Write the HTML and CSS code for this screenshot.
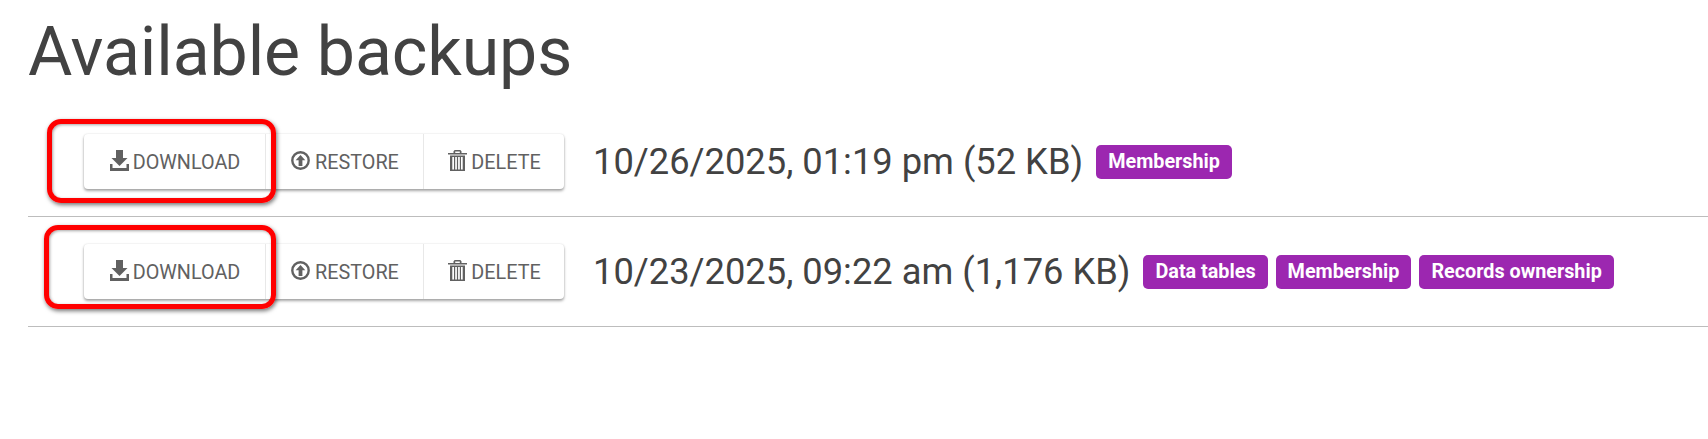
FILE: index.html
```html
<!DOCTYPE html>
<html lang="en">
<head>
<meta charset="UTF-8">
<title>Available backups</title>
<link rel="stylesheet" href="styles.css">
</head>
<body>
<div class="container">
  <h1>Available backups</h1>

  <div class="backup-row">
    <div class="btn-group">
      <a class="btn btn-download">
        <svg class="icon" viewBox="0 0 19 21"><path d="M6 0h7v8h4.500L9.500 16 1.500 8H6z"/><path d="M0 14h2.500v4h14v-4H19v7H0z"/></svg>DOWNLOAD
      </a>
      <a class="btn btn-restore">
        <svg class="icon" viewBox="0 0 19 21"><circle cx="9.500" cy="10.500" r="8.200" fill="none" stroke="currentColor" stroke-width="2.400"/><path d="M9.500 5l4.800 5.200h-2.900V16H7.600v-5.800H4.700z"/></svg>RESTORE
      </a>
      <a class="btn btn-delete">
        <svg class="icon" viewBox="0 0 19 21"><path d="M0 3h5.500V1.200L6.700 0h5.600l1.200 1.200V3H19v1.400H0zM7.200 3h4.600V1.500H7.200z"/><path fill-rule="evenodd" d="M2 5.500h15V21H2zM4.300 7v12.500h1.700V7zM7.200 7v12.500h1.700V7zM10.100 7v12.500h1.700V7zM13 7v12.500h1.700V7z"/></svg>DELETE
      </a>
    </div>
    <span class="backup-date">10/26/2025, 01:19 pm (52 KB)</span>
    <span class="badge">Membership</span>
    <div class="callout callout-first"></div>
  </div>

  <div class="backup-row">
    <div class="btn-group">
      <a class="btn btn-download">
        <svg class="icon" viewBox="0 0 19 21"><path d="M6 0h7v8h4.500L9.500 16 1.500 8H6z"/><path d="M0 14h2.500v4h14v-4H19v7H0z"/></svg>DOWNLOAD
      </a>
      <a class="btn btn-restore">
        <svg class="icon" viewBox="0 0 19 21"><circle cx="9.500" cy="10.500" r="8.200" fill="none" stroke="currentColor" stroke-width="2.400"/><path d="M9.500 5l4.800 5.200h-2.900V16H7.600v-5.800H4.700z"/></svg>RESTORE
      </a>
      <a class="btn btn-delete">
        <svg class="icon" viewBox="0 0 19 21"><path d="M0 3h5.500V1.200L6.700 0h5.600l1.200 1.200V3H19v1.400H0zM7.200 3h4.600V1.500H7.200z"/><path fill-rule="evenodd" d="M2 5.500h15V21H2zM4.300 7v12.500h1.700V7zM7.200 7v12.500h1.700V7zM10.100 7v12.500h1.700V7zM13 7v12.500h1.700V7z"/></svg>DELETE
      </a>
    </div>
    <span class="backup-date">10/23/2025, 09:22 am (1,176 KB)</span>
    <span class="badge">Data tables</span>
    <span class="badge">Membership</span>
    <span class="badge">Records ownership</span>
    <div class="callout callout-second"></div>
  </div>
</div>
</body>
</html>
```

FILE: styles.css
```css
body {
  font-family: Roboto, Arial, sans-serif;
  background-color: #fff;
  color: #424242;
  margin: 0;
  padding: 0;
}

.container {
  padding: 0 0 0 28px;
}

h1 {
  font-size: 68px;
  font-weight: 400;
  letter-spacing: -0.1px;
  line-height: 84px;
  margin: 0;
  padding: 10px 0 13px;
}

.backup-row {
  position: relative;
  display: flex;
  align-items: center;
  height: 109px;
  padding-left: 56px;
  border-bottom: 1px solid #bdbdbd;
}

.btn-group {
  display: flex;
  height: 55px;
  margin-right: 29px;
  border-radius: 4px;
  background-color: #fff;
  box-shadow: 0 2px 3px rgba(0, 0, 0, 0.35), 0 0 2px rgba(0, 0, 0, 0.12);
}

.btn {
  display: flex;
  align-items: center;
  justify-content: center;
  padding: 1px 0 0 1px;
  font-size: 19.8px;
  color: #616161;
  border-right: 1px solid #e8e8e8;
}

.btn:last-child {
  border-right: none;
}

.btn-download {
  width: 180px;
}

.btn-restore {
  width: 156px;
}

.btn-delete {
  width: 139px;
}

.icon {
  width: 19px;
  height: 21px;
  margin-right: 4px;
  margin-top: -4px;
  fill: currentColor;
}

.btn-restore .icon {
  margin-right: 5px;
}

.backup-date {
  font-size: 36.3px;
  margin-right: 13px;
}

.badge {
  background-color: #9c27b0;
  color: #fff;
  font-size: 19.8px;
  font-weight: 700;
  line-height: 34px;
  padding: 0 12px;
  border-radius: 5px;
  margin-right: 8px;
}

/* red annotation boxes drawn over the screenshot */
.callout {
  position: absolute;
  left: 19px;
  width: 219px;
  border: 5px solid #f00;
  border-radius: 14px;
  box-shadow: 1px 2px 4px rgba(0, 0, 0, 0.55), inset 1px 1px 3px rgba(0, 0, 0, 0.35);
}

.callout-first {
  top: 12px;
  height: 74px;
}

.callout-second {
  left: 16px;
  width: 222px;
  top: 8px;
  height: 74px;
}
```
